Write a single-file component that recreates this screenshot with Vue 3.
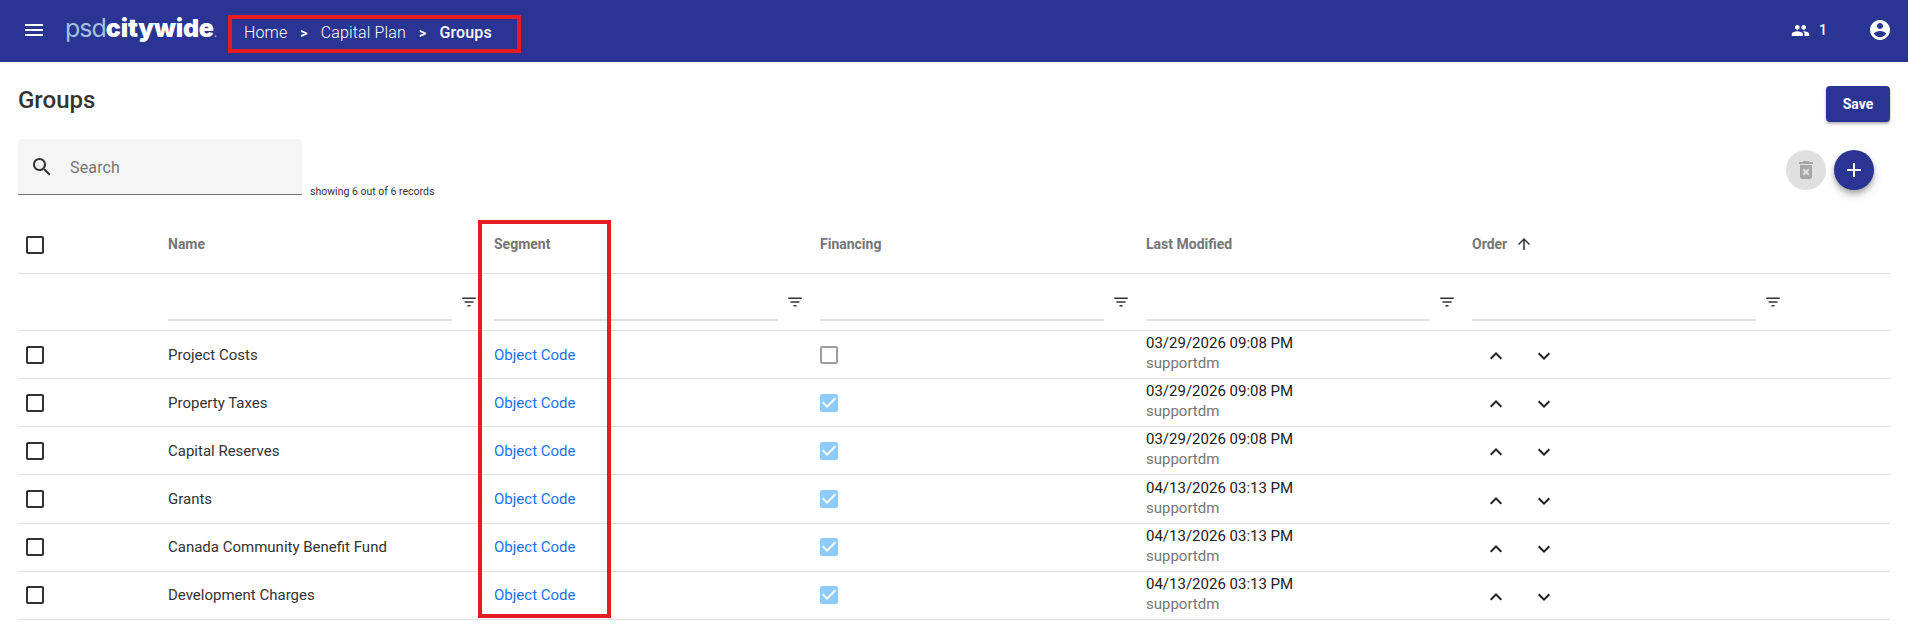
<script setup>
import { ref } from "vue";

const rows = ref([
  { name: "Project Costs", financing: false, date: "03/29/2026 09:08 PM" },
  { name: "Property Taxes", financing: true, date: "03/29/2026 09:08 PM" },
  { name: "Capital Reserves", financing: true, date: "03/29/2026 09:08 PM" },
  { name: "Grants", financing: true, date: "04/13/2026 03:13 PM" },
  { name: "Canada Community Benefit Fund", financing: true, date: "04/13/2026 03:13 PM" },
  { name: "Development Charges", financing: true, date: "04/13/2026 03:13 PM" },
]);

const columns = ["Name", "Segment", "Financing", "Last Modified", "Order"];

const boxOutline =
  "M19 5v14H5V5h14m0-2H5c-1.1 0-2 .9-2 2v14c0 1.1.9 2 2 2h14c1.1 0 2-.9 2-2V5c0-1.1-.9-2-2-2z";
const boxChecked =
  "M19 3H5c-1.11 0-2 .9-2 2v14c0 1.1.89 2 2 2h14c1.11 0 2-.89 2-2V5c0-1.1-.89-2-2-2zm-9 14l-5-5 1.41-1.41L10 14.17l7.59-7.59L19 8l-9 9z";
const filterIcon = "M10 18h4v-2h-4v2zM3 6v2h18V6H3zm3 7h12v-2H6v2z";
</script>

<template>
  <div class="page">
    <header class="topbar">
      <svg class="menu-icon" width="24" height="24" viewBox="0 0 24 24">
        <path d="M3 18h18v-2H3v2zm0-5h18v-2H3v2zm0-7v2h18V6H3z" />
      </svg>
      <div class="logo">
        <span class="logo-psd">psd</span><span class="logo-city">citywide</span><span class="logo-dot">.</span>
      </div>
      <nav class="crumbs">
        <span>Home</span>
        <b class="sep">&gt;</b>
        <span>Capital Plan</span>
        <b class="sep">&gt;</b>
        <span class="current">Groups</span>
      </nav>
      <div class="topbar-right">
        <svg class="users" width="19" height="19" viewBox="0 0 24 24">
          <path
            d="M16 11c1.66 0 2.99-1.34 2.99-3S17.66 5 16 5c-1.66 0-3 1.34-3 3s1.34 3 3 3zm-8 0c1.66 0 2.99-1.34 2.99-3S9.66 5 8 5C6.34 5 5 6.34 5 8s1.34 3 3 3zm0 2c-2.33 0-7 1.17-7 3.5V19h14v-2.5c0-2.33-4.67-3.5-7-3.5zm8 0c-.29 0-.62.02-.97.05 1.16.84 1.97 1.97 1.97 3.45V19h6v-2.5c0-2.33-4.67-3.5-7-3.5z"
          />
        </svg>
        <span class="user-count">1</span>
        <svg class="account" width="24" height="24" viewBox="0 0 24 24">
          <path
            d="M12 2C6.48 2 2 6.48 2 12s4.48 10 10 10 10-4.48 10-10S17.52 2 12 2zm0 3c1.66 0 3 1.34 3 3s-1.34 3-3 3-3-1.34-3-3 1.34-3 3-3zm0 14.2c-2.5 0-4.71-1.28-6-3.22.03-1.99 4-3.08 6-3.08 1.99 0 5.97 1.09 6 3.08-1.29 1.94-3.5 3.22-6 3.22z"
          />
        </svg>
      </div>
    </header>

    <main class="content">
      <div class="title-row">
        <h1>Groups</h1>
        <button class="save">Save</button>
      </div>

      <div class="toolbar">
        <div class="search">
          <svg width="24" height="24" viewBox="0 0 24 24">
            <path
              d="M15.5 14h-.79l-.28-.27C15.41 12.59 16 11.11 16 9.5 16 5.91 13.09 3 9.5 3S3 5.91 3 9.5 5.91 16 9.5 16c1.61 0 3.09-.59 4.23-1.57l.27.28v.79l5 4.99L20.49 19l-4.99-5zm-6 0C7.01 14 5 11.99 5 9.5S7.01 5 9.5 5 14 7.01 14 9.5 11.99 14 9.5 14z"
            />
          </svg>
          <span>Search</span>
        </div>
        <span class="records">showing 6 out of 6 records</span>
        <div class="actions">
          <div class="fab disabled">
            <svg width="24" height="24" viewBox="0 0 24 24">
              <path
                d="M6 19c0 1.1.9 2 2 2h8c1.1 0 2-.9 2-2V7H6v12zm2.46-7.12l1.41-1.41L12 12.59l2.12-2.12 1.41 1.41L13.41 14l2.12 2.12-1.41 1.41L12 15.41l-2.12 2.12-1.41-1.41L10.59 14l-2.13-2.12zM15.5 4l-1-1h-5l-1 1H5v2h14V4z"
              />
            </svg>
          </div>
          <div class="fab primary">
            <svg width="24" height="24" viewBox="0 0 24 24">
              <path d="M19 13h-6v6h-2v-6H5v-2h6V5h2v6h6v2z" />
            </svg>
          </div>
        </div>
      </div>

      <div class="table">
        <div class="row head">
          <div class="check-cell">
            <svg class="box" width="24" height="24" viewBox="0 0 24 24"><path :d="boxOutline" /></svg>
          </div>
          <div v-for="col in columns" :key="col" class="head-cell">
            {{ col }}
            <svg v-if="col === 'Order'" class="sort" width="18" height="18" viewBox="0 0 24 24">
              <path d="M4 12l1.41 1.41L11 7.83V20h2V7.83l5.58 5.59L20 12l-8-8-8 8z" />
            </svg>
          </div>
        </div>

        <div class="row filters">
          <div></div>
          <div v-for="col in columns" :key="col" class="filter-cell">
            <div class="filter-line"></div>
            <svg width="18" height="18" viewBox="0 0 24 24"><path :d="filterIcon" /></svg>
          </div>
        </div>

        <div v-for="row in rows" :key="row.name" class="row item">
          <div class="check-cell">
            <svg class="box" width="24" height="24" viewBox="0 0 24 24"><path :d="boxOutline" /></svg>
          </div>
          <div>{{ row.name }}</div>
          <div><a class="link">Object Code</a></div>
          <div>
            <svg v-if="row.financing" class="fin checked" width="24" height="24" viewBox="0 0 24 24"><path :d="boxChecked" /></svg>
            <svg v-else class="fin" width="24" height="24" viewBox="0 0 24 24"><path :d="boxOutline" /></svg>
          </div>
          <div class="modified">
            <div class="date">{{ row.date }}</div>
            <div class="user">supportdm</div>
          </div>
          <div class="order">
            <svg width="24" height="24" viewBox="0 0 24 24"><path d="M12 8l-6 6 1.41 1.41L12 10.83l4.59 4.58L18 14z" /></svg>
            <svg width="24" height="24" viewBox="0 0 24 24"><path d="M16.59 8.59L12 13.17 7.41 8.59 6 10l6 6 6-6z" /></svg>
          </div>
        </div>

        <div class="segment-mark"></div>
      </div>
    </main>
  </div>
</template>

<style>
html,
body {
  margin: 0;
  background: #fff;
}
</style>

<style scoped>
.page {
  font-family: Roboto, "Liberation Sans", sans-serif;
  color: #333;
  font-size: 15px;
}

.topbar {
  height: 62px;
  background: #2a3492;
  color: #fff;
  display: flex;
  align-items: center;
  padding: 0 16px 2px 22px;
  box-sizing: border-box;
}

.topbar svg {
  fill: #fff;
}

.logo {
  margin-left: 19px;
  width: 163px;
  font-size: 25px;
  line-height: 30px;
  white-space: nowrap;
  font-family: Inter, Roboto, sans-serif;
  letter-spacing: -1px;
}

.logo-psd {
  color: #9fc3e0;
  font-weight: 400;
}

.logo-city {
  font-weight: 900;
  letter-spacing: -0.2px;
}

.logo-dot {
  color: #9fc3e0;
  font-size: 12px;
}

.crumbs {
  box-sizing: border-box;
  width: 293px;
  height: 38px;
  margin-top: 7px;
  border: 4px solid #e61b23;
  padding-left: 12px;
  padding-bottom: 2px;
  display: flex;
  align-items: center;
  font-size: 16px;
  font-weight: 300;
  letter-spacing: 0.15px;
  white-space: nowrap;
}

.sep {
  margin: 0 13px;
  font-size: 14px;
  font-weight: 700;
}

.current {
  font-weight: 500;
}

.topbar-right {
  margin-left: auto;
  display: flex;
  align-items: center;
}

.users {
  margin-right: 1px;
}

.user-count {
  margin-left: 8px;
  font-size: 14px;
  font-weight: 500;
}

.account {
  margin-left: 41px;
}

.content {
  padding: 0 18px;
}

.title-row {
  display: flex;
  align-items: center;
  justify-content: space-between;
  height: 36px;
  padding-top: 24px;
}

.title-row h1 {
  margin: -8px 0 0;
  font-size: 24px;
  font-weight: 500;
  color: #333;
}

.save {
  width: 64px;
  height: 36px;
  border: none;
  border-radius: 4px;
  background: #2a3492;
  color: #fff;
  font-family: inherit;
  font-size: 14px;
  font-weight: 700;
  box-shadow: 0 2px 3px rgba(0, 0, 0, 0.3);
}

.toolbar {
  display: flex;
  align-items: flex-end;
  height: 56px;
  margin-top: 17px;
}

.search {
  box-sizing: border-box;
  width: 284px;
  height: 56px;
  background: #f5f5f5;
  border-bottom: 1px solid #757575;
  border-radius: 4px 4px 0 0;
  display: flex;
  align-items: center;
  padding-left: 12px;
  font-size: 16px;
  letter-spacing: 0.15px;
  color: #757575;
}

.search span {
  padding-top: 2px;
}

.search svg {
  fill: #333;
  margin-right: 16px;
}

.records {
  margin-left: 8px;
  margin-bottom: -3px;
  font-size: 10.5px;
  line-height: 13px;
  color: #333;
}

.actions {
  margin-left: auto;
  margin-right: 16px;
  display: flex;
  gap: 8px;
  align-self: flex-start;
  margin-top: 11px;
}

.fab {
  width: 40px;
  height: 40px;
  border-radius: 50%;
  display: flex;
  align-items: center;
  justify-content: center;
}

.fab.disabled {
  background: #e0e0e0;
}

.fab.disabled svg {
  fill: #a6a6a6;
}

.fab.primary {
  background: #2a3492;
  box-shadow: 0 3px 5px rgba(0, 0, 0, 0.25), 0 6px 10px rgba(0, 0, 0, 0.14);
}

.fab.primary svg {
  fill: #fff;
}

.table {
  position: relative;
  margin-top: 20px;
}

.row {
  display: grid;
  grid-template-columns: 150px 326px 326px 326px 326px 1fr;
  align-items: center;
  border-bottom: 1px solid #e0e0e0;
  box-sizing: border-box;
}

.head {
  height: 59px;
}

.filters {
  height: 57px;
}

.item {
  height: 48.17px;
}

.check-cell {
  padding-left: 5px;
  display: flex;
}

.head .check-cell {
  padding-top: 2px;
}

.box {
  fill: #333;
}

.head-cell {
  display: flex;
  align-items: center;
  font-size: 14px;
  font-weight: 700;
  color: #757575;
}

.sort {
  fill: #333;
  margin-left: 8px;
}

.filter-cell {
  display: flex;
  align-items: flex-start;
  height: 100%;
}

.filter-line {
  width: 284px;
  height: 2px;
  margin-top: 45px;
  background: #e0e0e0;
}

.filter-cell svg {
  fill: #333;
  margin: 19px 0 0 8px;
}

.link {
  color: #1a73e8;
}

.fin {
  display: block;
  margin-left: -3px;
  fill: #9e9e9e;
}

.fin.checked {
  fill: #90caf9;
}

.modified {
  margin-top: -3px;
}

.date {
  line-height: 20px;
  color: #212121;
}

.user {
  line-height: 20px;
  color: #757575;
}

.order {
  display: flex;
  gap: 24px;
  padding-left: 12px;
  margin-top: 3px;
}

.order svg {
  fill: #212121;
}

.segment-mark {
  position: absolute;
  left: 460px;
  top: 5px;
  width: 133px;
  height: 398px;
  box-sizing: border-box;
  border: 4px solid #e61b23;
  pointer-events: none;
}
</style>
